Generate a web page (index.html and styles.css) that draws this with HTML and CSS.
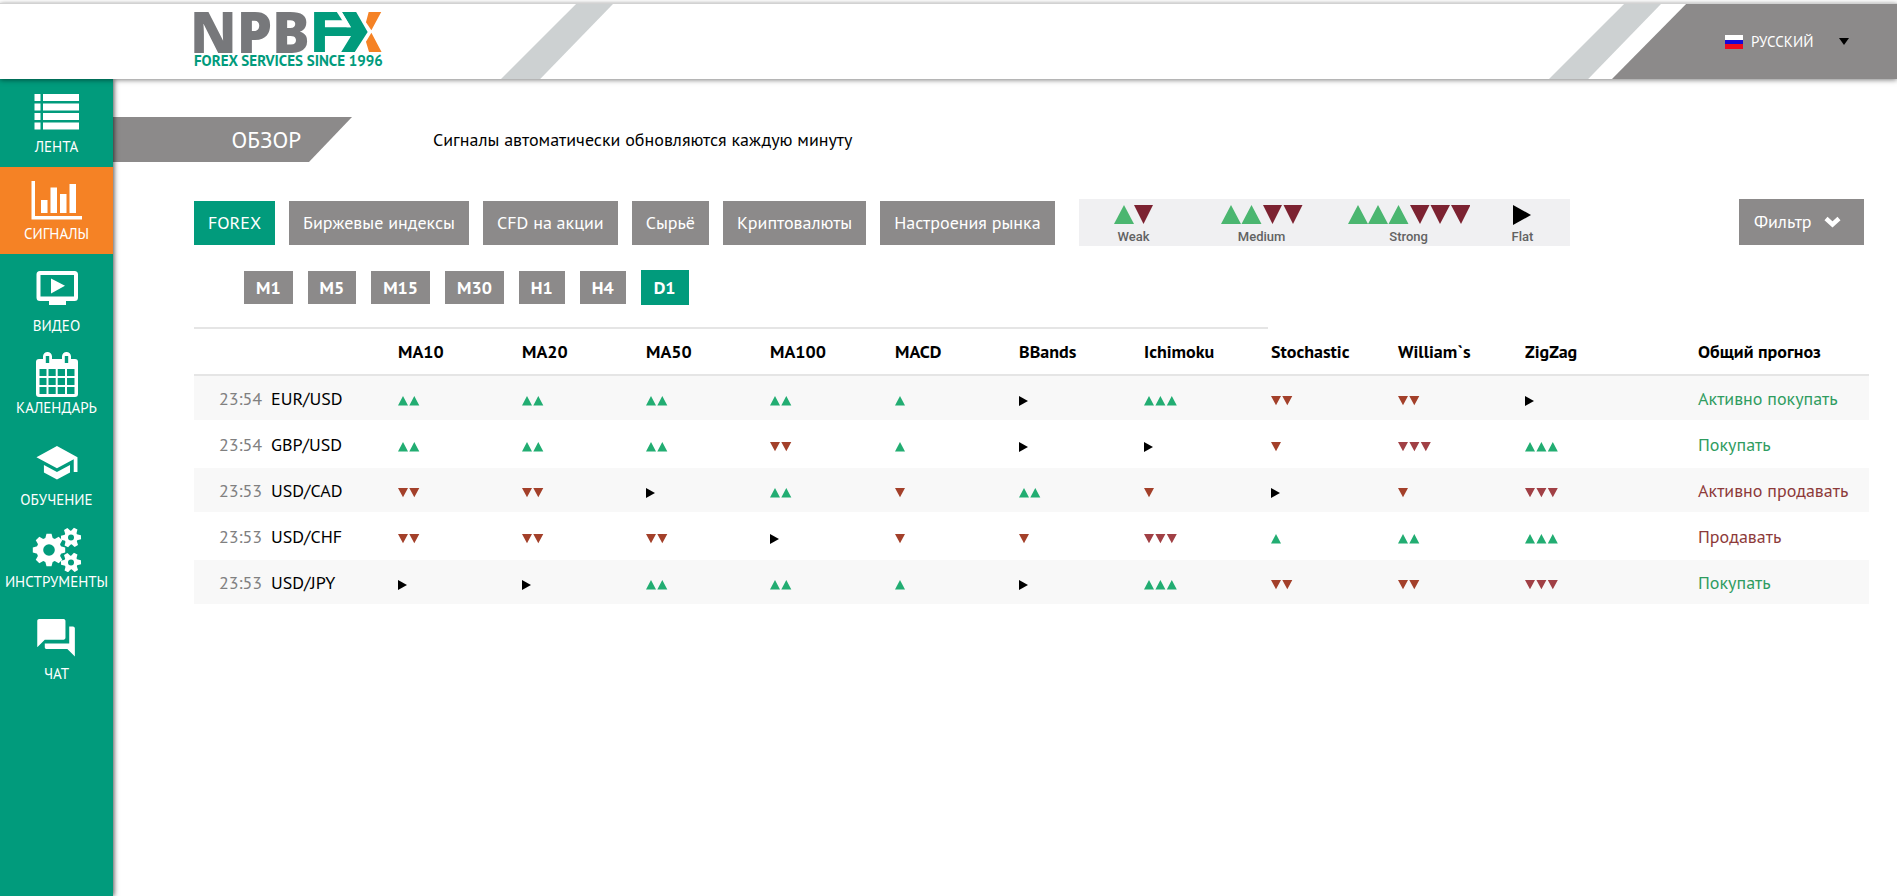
FILE: index.html
```html
<!DOCTYPE html>
<html lang="ru">
<head>
<meta charset="utf-8">
<title>NPBFX — Сигналы</title>
<link rel="stylesheet" href="styles.css">
</head>
<body>
<svg class="defs" aria-hidden="true">
  <symbol id="u1" viewBox="0 0 33 10"><path d="M0 9.5L5 0l5 9.5z" fill="#22ad72"/></symbol>
  <symbol id="u2" viewBox="0 0 33 10"><path d="M0 9.5L5 0l5 9.5zM11.3 9.5l5-9.5 5 9.5z" fill="#22ad72"/></symbol>
  <symbol id="u3" viewBox="0 0 33 10"><path d="M0 9.5L5 0l5 9.5zM11.4 9.5l5-9.5 5 9.5zM22.8 9.5l5-9.5 5 9.5z" fill="#22ad72"/></symbol>
  <symbol id="d1" viewBox="0 0 33 10"><path d="M0 0h10L5 9.3z" fill="#a3402a"/></symbol>
  <symbol id="d2" viewBox="0 0 33 10"><path d="M0 0h10L5 9.3zM11.3 0h10l-5 9.3z" fill="#a3402a"/></symbol>
  <symbol id="d3" viewBox="0 0 33 10"><path d="M0 0h10L5 9.3zM11.4 0h10l-5 9.3zM22.8 0h10l-5 9.3z" fill="#a14045"/></symbol>
  <symbol id="f" viewBox="0 0 33 10"><path d="M0 0l9 5-9 5z" fill="#000"/></symbol>
</svg>

<header class="header">
  <a class="logo" href="#">
    <span class="logo-row">
      <span class="logo-npb">NPB</span>
      <svg class="logo-mark" viewBox="388 37 200 118" aria-hidden="true">
        <path fill="#019b7c" d="M388 37h76l17 24h-61v21h76L470 37h42l34 59-38 59h-40l29-47h-77v47h-32z"/>
        <path fill="#fff" d="M455 37h15l27 45h-13z"/>
        <path fill="#f58225" d="M549 37h37l-29 54-16-24zM541 125l16-27 30 57h-37z"/>
      </svg>
    </span>
    <span class="logo-tag">FOREX SERVICES SINCE 1996</span>
  </a>
  <span class="stripe"></span>
  <span class="stripe stripe-right"></span>
  <div class="lang">
    <svg class="flag" viewBox="0 0 18 14" aria-hidden="true"><path fill="#fff" d="M0 0h18v5H0z"/><path fill="#1407d8" d="M0 5h18v4H0z"/><path fill="#f00a1c" d="M0 9h18v5H0z"/></svg>
    <button class="lang-btn" type="button">РУССКИЙ
      <svg class="caret" viewBox="0 0 10 7" aria-hidden="true"><path d="M0 0h10L5 7z"/></svg>
    </button>
  </div>
</header>

<div class="page">
  <nav class="sidebar">
    <a class="item" href="#">
      <svg viewBox="0 0 56 50"><path fill="#fff" d="M5.500 7h6v7h-6zM14 7h36v7H14zM5.500 16.500h6v7h-6zM14 16.500h36v7H14zM5.500 26h6v7h-6zM14 26h36v7H14zM5.500 35.500h6v7h-6zM14 35.500h36v7H14z"/></svg>ЛЕНТА</a>
    <a class="item item-active" href="#">
      <svg viewBox="0 0 56 50"><path fill="#fff" d="M2.500 7h3.500v35H53v3.500H2.500zM12 26h6.500v13H12zM21.500 13.500H28V39h-6.500zM31 20h6.500v19H31zM40.500 10H47v29h-6.500z"/></svg>СИГНАЛЫ</a>
    <a class="item item-low" href="#">
      <svg viewBox="0 0 56 50"><path fill="#fff" fill-rule="evenodd" d="M11 5h34.500a3.500 3.500 0 0 1 3.500 3.500v23a3.500 3.500 0 0 1-3.500 3.500H37v4H20v-4h-9a3.500 3.500 0 0 1-3.500-3.500v-23A3.500 3.500 0 0 1 11 5zm.5 4v21.500H45V9zM22 12.500l14 7.300-14 7.700z"/></svg>ВИДЕО</a>
    <a class="item" href="#">
      <svg viewBox="0 0 56 50"><path fill="#fff" fill-rule="evenodd" d="M10 11h4V8.500a4.500 4.500 0 0 1 9 0V11h10V8.500a4.500 4.500 0 0 1 9 0V11h4a3 3 0 0 1 3 3v32a3 3 0 0 1-3 3H10a3 3 0 0 1-3-3V14a3 3 0 0 1 3-3zm6.800-3v7h3.400V8zm19 0v7h3.400V8zM10.500 21v7h7v-7zm9 0v7h7.200v-7zm9.200 0v7h7.300v-7zm9.300 0v7h7.500v-7zM10.500 30v7h7v-7zm9 0v7h7.200v-7zm9.200 0v7h7.300v-7zm9.300 0v7h7.500v-7zM10.500 39v7h7v-7zm9 0v7h7.200v-7zm9.200 0v7h7.300v-7zm9.300 0v7h7.500v-7z"/></svg>КАЛЕНДАРЬ</a>
    <a class="item item-low" href="#">
      <svg viewBox="0 0 56 50"><g transform="translate(5.600 .4) scale(1.864)"><path fill="#fff" d="M5 13.180v4L12 21l7-3.820v-4L12 17l-7-3.820zM12 3L1 9l11 6 9-4.910V17h2V9L12 3z"/></g></svg>ОБУЧЕНИЕ</a>
    <a class="item" href="#">
      <svg viewBox="0 0 56 50">
        <defs>
          <g id="gear8"><circle r="12.500"/><path id="t8" d="M-2.500-16.200h5L4.500-9v18l-2 7.200h-5l-2-7.200V-9z"/><use href="#t8" transform="rotate(45)"/><use href="#t8" transform="rotate(90)"/><use href="#t8" transform="rotate(135)"/></g>
          <g id="gear6"><circle r="6.800"/><path id="t6" d="M-2-10h4l1 4V6l-1 4h-4l-1-4V-6z"/><use href="#t6" transform="rotate(60)"/><use href="#t6" transform="rotate(120)"/></g>
        </defs>
        <g fill="#fff"><use href="#gear8" transform="translate(20 28)"/><use href="#gear6" transform="translate(42 15.500) rotate(28)"/><use href="#gear6" transform="translate(42 40.500) rotate(28)"/></g>
        <g fill="#019b7c"><circle cx="20" cy="28" r="5.800"/><circle cx="42" cy="15.500" r="3"/><circle cx="42" cy="40.500" r="3"/></g>
      </svg>ИНСТРУМЕНТЫ</a>
    <a class="item item-low" href="#">
      <svg viewBox="0 0 56 50"><g transform="translate(4.500 1.200) scale(1.880)"><path fill="#fff" d="M21 6h-2v9H6v2c0 .55.45 1 1 1h11l4 4V7c0-.55-.45-1-1-1zm-4 6V3c0-.55-.45-1-1-1H3c-.55 0-1 .45-1 1v14l4-4h10c.55 0 1-.45 1-1z"/></g></svg>ЧАТ</a>
  </nav>

  <main class="main">
    <div class="title-row">
      <h1 class="ribbon">ОБЗОР</h1>
      <p class="note">Сигналы автоматически обновляются каждую минуту</p>
    </div>

    <div class="toolbar">
      <div class="tabs">
        <button class="tab tab-active" type="button">FOREX</button>
        <button class="tab" type="button">Биржевые индексы</button>
        <button class="tab" type="button">CFD на акции</button>
        <button class="tab" type="button">Сырьё</button>
        <button class="tab" type="button">Криптовалюты</button>
        <button class="tab" type="button">Настроения рынка</button>
      </div>
      <div class="legend">
        <div class="mark mark-weak"><svg width="40" height="20" viewBox="0 0 40 20"><path fill="#4bb670" d="M0 19L10 0l10 19z"/><path fill="#7c2231" d="M20 0h19l-9.500 19z"/></svg>Weak</div>
        <div class="mark mark-medium"><svg width="82" height="20" viewBox="0 0 82 20"><path fill="#4bb670" d="M0 19L10 0l10 19zM20.500 19l10-19 10 19z"/><path fill="#7c2231" d="M42 0h19l-9.500 19zM62.500 0h19L72 19z"/></svg>Medium</div>
        <div class="mark mark-strong"><svg width="122" height="20" viewBox="0 0 122 20"><path fill="#4bb670" d="M0 19L10 0l10 19zM20 19L30 0l10 19zM40.500 19l10-19 10 19z"/><path fill="#7c2231" d="M62 0h19.500l-9.500 19zM82.500 0h19.500L92 19zM103 0h19.500l-9.500 19z"/></svg>Strong</div>
        <div class="mark mark-flat"><svg width="18" height="20" viewBox="0 0 18 20"><path d="M0 0l18 10L0 20z"/></svg>Flat</div>
      </div>
      <button class="filter" type="button">Фильтр
        <svg width="17" height="12" viewBox="0 0 17 12" aria-hidden="true"><path d="M2 2.500l6.500 6 6.500-6" fill="none" stroke="#fff" stroke-width="4.500"/></svg>
      </button>
    </div>

    <div class="frames">
      <button class="frame" type="button">M1</button>
      <button class="frame" type="button">M5</button>
      <button class="frame" type="button">M15</button>
      <button class="frame" type="button">M30</button>
      <button class="frame" type="button">H1</button>
      <button class="frame" type="button">H4</button>
      <button class="frame frame-active" type="button">D1</button>
    </div>

    <table class="signals">
      <colgroup><col class="c-time"><col class="c-pair"><col class="c-a"><col class="c-a"><col class="c-a"><col class="c-b"><col class="c-a"><col class="c-b"><col class="c-c"><col class="c-c"><col class="c-c"><col class="c-zig"><col class="c-sum"></colgroup>
      <thead>
        <tr><th class="ruled"></th><th class="ruled"></th><th class="ruled">MA10</th><th class="ruled">MA20</th><th class="ruled">MA50</th><th class="ruled">MA100</th><th class="ruled">MACD</th><th class="ruled">BBands</th><th class="ruled">Ichimoku</th><th>Stochastic</th><th>William`s</th><th>ZigZag</th><th>Общий прогноз</th></tr>
      </thead>
      <tbody>
        <tr><td class="time">23:54</td><td>EUR/USD</td><td><svg class="sig"><use href="#u2"/></svg></td><td><svg class="sig"><use href="#u2"/></svg></td><td><svg class="sig"><use href="#u2"/></svg></td><td><svg class="sig"><use href="#u2"/></svg></td><td><svg class="sig"><use href="#u1"/></svg></td><td><svg class="sig"><use href="#f"/></svg></td><td><svg class="sig"><use href="#u3"/></svg></td><td><svg class="sig"><use href="#d2"/></svg></td><td><svg class="sig"><use href="#d2"/></svg></td><td><svg class="sig"><use href="#f"/></svg></td><td class="buy">Активно покупать</td></tr>
        <tr><td class="time">23:54</td><td>GBP/USD</td><td><svg class="sig"><use href="#u2"/></svg></td><td><svg class="sig"><use href="#u2"/></svg></td><td><svg class="sig"><use href="#u2"/></svg></td><td><svg class="sig"><use href="#d2"/></svg></td><td><svg class="sig"><use href="#u1"/></svg></td><td><svg class="sig"><use href="#f"/></svg></td><td><svg class="sig"><use href="#f"/></svg></td><td><svg class="sig"><use href="#d1"/></svg></td><td><svg class="sig"><use href="#d3"/></svg></td><td><svg class="sig"><use href="#u3"/></svg></td><td class="buy">Покупать</td></tr>
        <tr><td class="time">23:53</td><td>USD/CAD</td><td><svg class="sig"><use href="#d2"/></svg></td><td><svg class="sig"><use href="#d2"/></svg></td><td><svg class="sig"><use href="#f"/></svg></td><td><svg class="sig"><use href="#u2"/></svg></td><td><svg class="sig"><use href="#d1"/></svg></td><td><svg class="sig"><use href="#u2"/></svg></td><td><svg class="sig"><use href="#d1"/></svg></td><td><svg class="sig"><use href="#f"/></svg></td><td><svg class="sig"><use href="#d1"/></svg></td><td><svg class="sig"><use href="#d3"/></svg></td><td class="sell">Активно продавать</td></tr>
        <tr><td class="time">23:53</td><td>USD/CHF</td><td><svg class="sig"><use href="#d2"/></svg></td><td><svg class="sig"><use href="#d2"/></svg></td><td><svg class="sig"><use href="#d2"/></svg></td><td><svg class="sig"><use href="#f"/></svg></td><td><svg class="sig"><use href="#d1"/></svg></td><td><svg class="sig"><use href="#d1"/></svg></td><td><svg class="sig"><use href="#d3"/></svg></td><td><svg class="sig"><use href="#u1"/></svg></td><td><svg class="sig"><use href="#u2"/></svg></td><td><svg class="sig"><use href="#u3"/></svg></td><td class="sell">Продавать</td></tr>
        <tr><td class="time">23:53</td><td>USD/JPY</td><td><svg class="sig"><use href="#f"/></svg></td><td><svg class="sig"><use href="#f"/></svg></td><td><svg class="sig"><use href="#u2"/></svg></td><td><svg class="sig"><use href="#u2"/></svg></td><td><svg class="sig"><use href="#u1"/></svg></td><td><svg class="sig"><use href="#f"/></svg></td><td><svg class="sig"><use href="#u3"/></svg></td><td><svg class="sig"><use href="#d2"/></svg></td><td><svg class="sig"><use href="#d2"/></svg></td><td><svg class="sig"><use href="#d3"/></svg></td><td class="buy">Покупать</td></tr>
      </tbody>
    </table>
  </main>
</div>
</body>
</html>
```
FILE: styles.css
```css
* { box-sizing: border-box; }
body {
  margin: 0;
  min-height: 100vh;
  display: flex;
  flex-direction: column;
  background: #fff;
  color: #000;
  font: 18px/24px "PT Sans", "Noto Sans", sans-serif;
}
button { font: inherit; border: 0; cursor: pointer; }
a { color: inherit; text-decoration: none; }
svg { flex: none; }
.defs { position: absolute; width: 0; height: 0; }

/* header */
.header {
  position: relative;
  z-index: 2;
  display: flex;
  margin-top: 3px;
  height: 76px;
  padding-left: 194px;
  border-top: 1px solid #d2d2d2;
  background: #fff;
  box-shadow: 0 1px 5px rgba(0, 0, 0, .5);
}
.logo { width: 188px; padding-top: 8px; display: flex; flex-direction: column; }
.logo-row { display: flex; height: 40px; align-items: flex-start; justify-content: space-between; }
.logo-npb {
  margin-left: -4px;
  color: #77787b;
  font: 800 56px/38px "Open Sans", sans-serif;
}
.logo-mark { width: 68px; height: 40px; }
.logo-tag { color: #019b7c; font-size: 15px; line-height: 18px; font-weight: 700; white-space: nowrap; }
.stripe {
  width: 112px;
  margin-left: 119px;
  background: #cdd1d2;
  clip-path: polygon(67% 0, 100% 0, 35% 100%, 0 100%);
}
.stripe-right { margin-left: auto; }
.lang {
  width: 285px;
  margin-left: -49px;
  padding: 0 48px 0 113px;
  display: flex;
  align-items: center;
  gap: 8px;
  background: #8c8a8a;
  color: #fff;
  font-size: 15px;
  clip-path: polygon(26% 0, 100% 0, 100% 100%, 0 100%);
}
.flag { width: 18px; height: 14px; }
.lang-btn { flex: 1; display: flex; align-items: center; justify-content: space-between; padding: 0; background: none; color: #fff; }
.caret { width: 10px; height: 7px; }

/* layout */
.page { flex: 1; display: flex; }
.sidebar {
  position: relative;
  z-index: 1;
  flex: none;
  width: 113px;
  padding-top: 1px;
  background: #019b7c;
  box-shadow: 1px 0 5px rgba(0, 0, 0, .7);
}
.item {
  display: flex;
  flex-direction: column;
  align-items: center;
  height: 87px;
  padding-top: 7px;
  color: #fff;
  font-size: 15px;
  line-height: 20px;
}
.item svg { width: 56px; height: 50px; }
.item-low { padding-top: 12px; }
.item-active { background: #f58225; }
.main { flex: 1; min-width: 0; }

.title-row { display: flex; align-items: center; margin-top: 38px; gap: 81px; }
.ribbon {
  margin: 0;
  width: 239px;
  height: 45px;
  padding-right: 51px;
  background: #8c8a8a;
  color: #fff;
  font-size: 23px;
  line-height: 45px;
  font-weight: 400;
  text-align: right;
  clip-path: polygon(0 0, 100% 0, 82% 100%, 0 100%);
}
.note { margin: 0; }

.toolbar { display: flex; align-items: center; margin: 37px 33px 0 81px; }
.tabs { display: flex; gap: 14px; }
.tab { height: 44px; padding: 0 14px; background: #8c8a8a; color: #fff; white-space: nowrap; }
.tab-active { background: #019b7c; }
.legend {
  display: flex;
  width: 491px;
  height: 47px;
  margin-left: 24px;
  padding-top: 6px;
  background: #f0f0f2;
}
.mark {
  display: flex;
  flex-direction: column;
  align-items: center;
  color: #626262;
  font: 500 13px/16px Roboto, sans-serif;
  gap: 4px;
}
.mark-weak { margin-left: 35px; }
.mark-medium { margin-left: 67px; }
.mark-strong { margin-left: 45px; }
.mark-flat { margin-left: 42px; }
.filter {
  display: flex;
  align-items: center;
  align-self: flex-start;
  gap: 12px;
  height: 46px;
  width: 125px;
  margin-left: auto;
  padding: 0 15px;
  background: #8c8a8a;
  color: #fff;
}

.frames { display: flex; align-items: center; gap: 15px; height: 35px; margin: 24px 0 0 131px; }
.frame { height: 33px; padding: 0 12px; background: #8c8a8a; color: #fff; font-weight: 700; }
.frame-active { height: 35px; padding: 0 13px; background: #019b7c; }

/* signals table */
.signals {
  width: calc(100% - 110px);
  margin: 22px 29px 0 81px;
  table-layout: fixed;
  border-collapse: separate;
  border-spacing: 0;
}
.c-time { width: 74px; }
.c-pair { width: 127px; }
.c-a { width: 124px; }
.c-b { width: 125px; }
.c-c { width: 127px; }
.c-zig { width: 173px; }
.c-sum { width: 174px; }
.signals th {
  height: 49px;
  padding: 0 3px;
  border-top: 2px solid transparent;
  border-bottom: 2px solid #e5e5e5;
  text-align: left;
  font-weight: 700;
  white-space: nowrap;
}
.signals th.ruled { border-top-color: #e5e5e5; }
.signals td {
  height: 46px;
  padding: 1px 3px 0;
  border-bottom: 2px solid #fff;
  white-space: nowrap;
  vertical-align: middle;
}
.signals tbody tr:nth-child(odd) td { background: #f8f8f8; }
.signals td.time { padding-left: 25px; color: #808080; }
.signals td.buy { color: #2f9c60; }
.signals td.sell { color: #8d3a3a; }
.sig { display: block; width: 33px; height: 10px; margin-top: 4px; }
```
